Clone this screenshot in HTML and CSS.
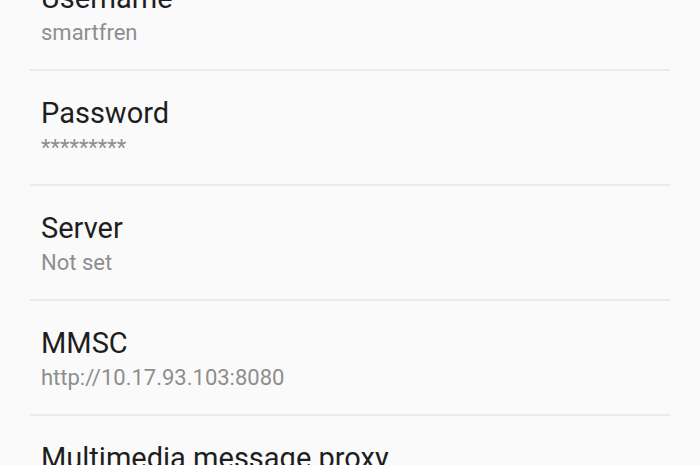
FILE: index.html
```html
<!DOCTYPE html>
<html lang="en">
<head>
  <meta charset="UTF-8">
  <meta name="viewport" content="width=device-width, initial-scale=1.0">
  <title>APN settings</title>
  <link rel="stylesheet" href="styles.css">
</head>
<body>
  <ul class="pref-list">
    <li class="pref-item">
      <p class="pref-title">Username</p>
      <p class="pref-summary">smartfren</p>
    </li>
    <li class="pref-item">
      <p class="pref-title">Password</p>
      <p class="pref-summary">*********</p>
    </li>
    <li class="pref-item">
      <p class="pref-title">Server</p>
      <p class="pref-summary">Not set</p>
    </li>
    <li class="pref-item">
      <p class="pref-title">MMSC</p>
      <p class="pref-summary">http://10.17.93.103:8080</p>
    </li>
    <li class="pref-item">
      <p class="pref-title">Multimedia message proxy</p>
    </li>
  </ul>
</body>
</html>
```

FILE: styles.css
```css
* {
  box-sizing: border-box;
}
body {
  margin: 0;
  background-color: #fafafa;
  font-family: Roboto, "Noto Sans", sans-serif;
  overflow: hidden;
}
.pref-list {
  list-style: none;
  margin: -44px 30px 0;
  padding: 0;
}
.pref-item {
  padding: 25px 11px 18px;
  border-bottom: 2px solid #ebebeb;
}
.pref-title {
  margin: 0;
  font-size: 29px;
  line-height: 34px;
  color: #1e1e1e;
}
.pref-summary {
  margin: 0;
  font-size: 22px;
  line-height: 36px;
  color: #8e8e8e;
}
```
